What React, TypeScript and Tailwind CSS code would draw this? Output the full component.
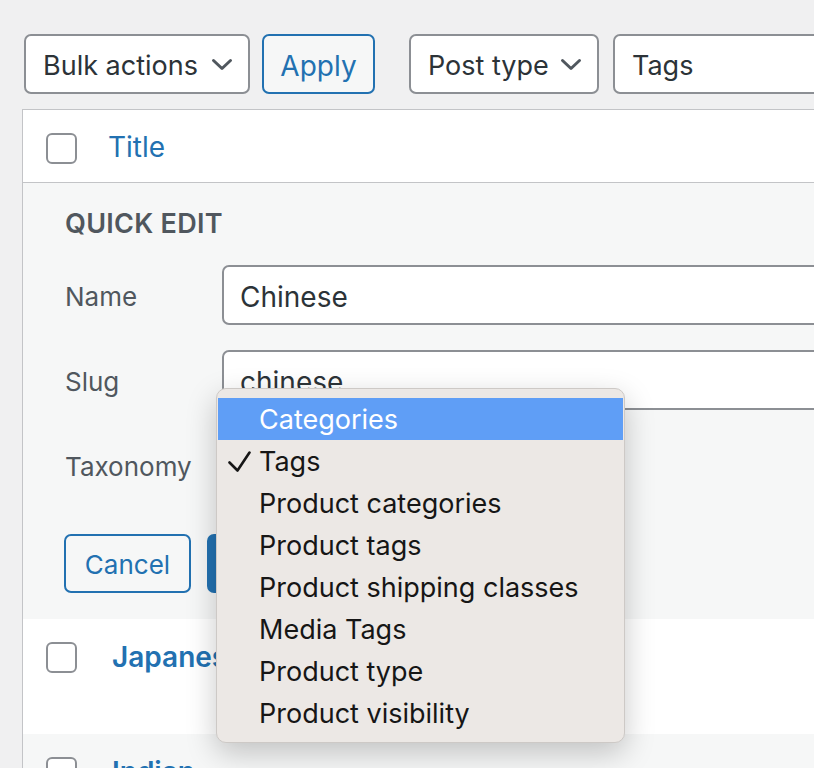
import React from "react";

function Chevron() {
  return (
    <svg width="22" height="13" viewBox="0 0 22 13" fill="none" className="shrink-0">
      <path d="M2.5 2.5l8.5 8 8.5-8" stroke="#50575e" strokeWidth="3" strokeLinecap="round" strokeLinejoin="round" />
    </svg>
  );
}

function Select({ label, width, chevron = true }: { label: string; width: string; chevron?: boolean }) {
  return (
    <div
      className={`${width} h-[60px] shrink-0 flex items-center justify-between pl-[17px] pr-[15px] bg-white border-2 border-[#8c8f94] rounded-[7px] text-[27px] text-[#2c3338]`}
    >
      <span className="pt-[5px]">{label}</span>
      {chevron && <Chevron />}
    </div>
  );
}

function Checkbox() {
  return <div className="w-[31px] h-[31px] shrink-0 bg-white border-2 border-[#8c8f94] rounded-[6px]" />;
}

function Field({ label, value }: { label: string; value?: string }) {
  return (
    <div className="flex items-center h-[60px]">
      <div className="w-[157px] shrink-0 pt-[3px] text-[26px] text-[#50575e]">{label}</div>
      <div className="w-[700px] h-[60px] flex items-center pl-[16px] pt-[3px] bg-white border-2 border-[#8c8f94] rounded-[7px] text-[28px] text-[#2c3338]">
        {value}
      </div>
    </div>
  );
}

const options = [
  "Categories",
  "Tags",
  "Product categories",
  "Product tags",
  "Product shipping classes",
  "Media Tags",
  "Product type",
  "Product visibility",
];

export default function App() {
  return (
    <div className="relative w-[814px] h-[768px] overflow-hidden bg-[#f0f0f1] font-['Inter',sans-serif]">
      <div className="flex items-center pt-[34px] pl-[24px] w-[1100px]">
        <Select label="Bulk actions" width="w-[226px]" />
        <div className="ml-[12px] w-[113px] h-[60px] shrink-0 flex items-center justify-center pt-[3px] bg-[#f6f7f7] border-2 border-[#2271b1] rounded-[7px] text-[28px] text-[#2271b1]">
          Apply
        </div>
        <div className="ml-[34px]">
          <Select label="Post type" width="w-[190px]" />
        </div>
        <div className="ml-[14px]">
          <Select label="Tags" width="w-[260px]" chevron={false} />
        </div>
      </div>

      <div className="mt-[15px] ml-[22px] w-[1100px] border border-[#c3c4c7] bg-white">
        <div className="flex items-start h-[73px] pt-[23px] pl-[23px] border-b border-[#c3c4c7]">
          <Checkbox />
          <div className="ml-[31px] -mt-[2px] h-[31px] flex items-center text-[28px] text-[#2271b1]">Title</div>
        </div>

        <div className="bg-[#f6f7f7] pt-[25px] pb-[26px] pl-[42px]">
          <div className="text-[27px] leading-[32px] font-semibold text-[#50575e] tracking-[0.01em]">QUICK EDIT</div>
          <div className="mt-[25px] flex flex-col gap-[25px]">
            <Field label="Name" value="Chinese" />
            <Field label="Slug" value="chinese" />
            <div className="flex items-center h-[60px]">
              <div className="w-[157px] shrink-0 pt-[3px] text-[26px] text-[#50575e]">Taxonomy</div>
              <div className="w-[390px] h-[60px] bg-white border-2 border-[#8c8f94] rounded-[7px]" />
            </div>
          </div>
          <div className="mt-[39px] flex items-center -ml-px">
            <div className="w-[127px] h-[59px] flex items-center justify-center pt-[2px] bg-[#f6f7f7] border-2 border-[#2271b1] rounded-[7px] text-[26px] text-[#2271b1]">
              Cancel
            </div>
            <div className="ml-[16px] w-[120px] h-[59px] bg-[#2271b1] rounded-[7px]" />
          </div>
        </div>

        <div className="bg-white h-[115px] pt-[23px] pl-[23px] flex items-start">
          <Checkbox />
          <div className="ml-[35px] -mt-[1px] h-[31px] flex items-center text-[28px] font-semibold text-[#2271b1]">Japanese</div>
        </div>
        <div className="bg-[#f6f7f7] h-[115px] pt-[23px] pl-[23px] flex items-start">
          <Checkbox />
          <div className="ml-[35px] -mt-[1px] h-[31px] flex items-center text-[28px] font-semibold text-[#2271b1]">Indian</div>
        </div>
      </div>

      <div className="absolute left-[216px] top-[388px] w-[409px] pt-[9px] pb-[8px] bg-[#ece8e5] border border-[#cdc9c6] rounded-[10px] shadow-[0_10px_30px_rgba(0,0,0,0.22)]">
        {options.map((o, i) => (
          <div
            key={o}
            className={`mx-px h-[42px] flex items-center text-[27px] ${i === 0 ? "bg-[#5f9ef6] text-white" : "text-[#161616]"}`}
          >
            <div className="w-[41px] shrink-0 flex justify-end pr-[8px]">
              {o === "Tags" && (
                <svg width="23" height="21" viewBox="0 0 23 21" fill="none">
                  <path d="M1.5 11.5l8 8L21.5 1.5" stroke="#161616" strokeWidth="2.6" strokeLinecap="round" strokeLinejoin="round" />
                </svg>
              )}
            </div>
            <span className="pt-[3px]">{o}</span>
          </div>
        ))}
      </div>
    </div>
  );
}
